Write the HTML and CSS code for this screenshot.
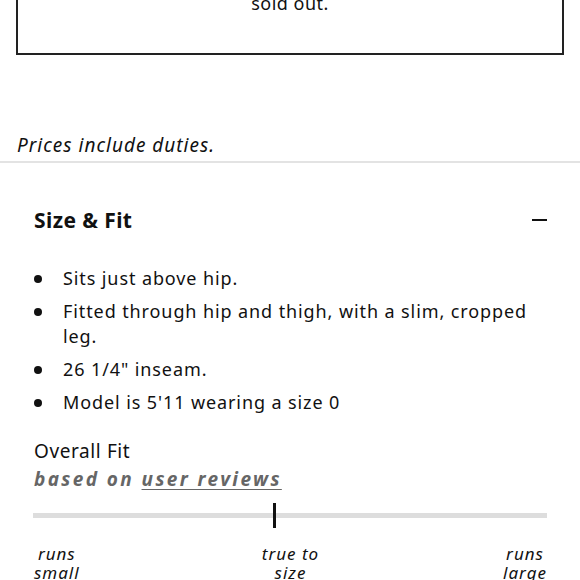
FILE: index.html
```html
<!DOCTYPE html>
<html lang="en">

<head>
	<meta charset="UTF-8">
	<meta name="viewport" content="width=device-width, initial-scale=1.0">
	<title>Size &amp; Fit</title>
	<link rel="stylesheet" href="styles.css">
</head>

<body>

	<div class="notice">sold out.</div>

	<p class="duties">Prices include duties.</p>

	<section class="panel">
		<div class="panel-head">
			<h2>Size &amp; Fit</h2>
			<span class="toggle"></span>
		</div>

		<ul class="details">
			<li>Sits just above hip.</li>
			<li>Fitted through hip and thigh, with a slim, cropped leg.</li>
			<li>26 1/4" inseam.</li>
			<li>Model is 5'11 wearing a size 0</li>
		</ul>

		<div class="fit">
			<div class="fit-title">Overall Fit</div>
			<div class="fit-source">based on <a href="#">user reviews</a></div>

			<div class="meter">
				<div class="track"></div>
				<div class="marker" style="left: 46.6%"></div>
			</div>

			<div class="scale">
				<span class="scale-low">runs<br>small</span>
				<span class="scale-mid">true to<br>size</span>
				<span class="scale-high">runs<br>large</span>
			</div>
		</div>
	</section>

</body>

</html>
```

FILE: styles.css
```css
body {
	font-family: 'Noto Sans', 'Lato', sans-serif;
	color: #111;
	background-color: #fff;
	margin: 0;
}

.notice {
	margin: -32px 16px 0 16px;
	padding: 20px 20px 37px;
	border: 2px solid #222;
	text-align: center;
	font-size: 18px;
	line-height: 26px;
	letter-spacing: 0.5px;
}

.duties {
	margin: 77px 0 0;
	padding: 0 17px 3px;
	border-bottom: 2px solid #e3e3e3;
	font-style: italic;
	font-size: 19px;
	line-height: 26px;
	letter-spacing: 1px;
}

.panel {
	padding: 0 33px 0 34px;
}

.panel-head {
	display: flex;
	justify-content: space-between;
	align-items: center;
	margin-top: 43px;
}

.panel-head h2 {
	margin: 0;
	font-size: 21px;
	line-height: 28px;
	font-weight: bold;
	letter-spacing: 0.4px;
}

.toggle {
	width: 15px;
	height: 2px;
	background-color: #111;
}

.details {
	list-style: none;
	margin: 32px 0 0;
	padding: 0;
	display: flex;
	flex-direction: column;
	gap: 8px;
	font-size: 18px;
	line-height: 25px;
	letter-spacing: 0.9px;
}

.details li {
	display: flex;
	align-items: flex-start;
}

.details li::before {
	content: "";
	flex: none;
	width: 8px;
	height: 8px;
	border-radius: 50%;
	background-color: #111;
	margin: 9px 21px 0 0;
}

.fit {
	margin-top: 22px;
}

.fit-title {
	font-size: 19px;
	line-height: 28px;
	letter-spacing: 0.6px;
}

.fit-source {
	font-size: 19px;
	line-height: 28px;
	font-weight: bold;
	font-style: italic;
	color: #666;
	letter-spacing: 2.4px;
}

.fit-source a {
	color: #666;
	text-decoration: underline;
	text-underline-offset: 3px;
}

.meter {
	position: relative;
	display: flex;
	align-items: center;
	height: 25px;
	margin: 10px 0 0 -1px;
}

.track {
	flex: 1;
	height: 5px;
	background-color: #ddd;
}

.marker {
	position: absolute;
	top: 0;
	width: 3px;
	height: 25px;
	background-color: #111;
}

.scale {
	display: grid;
	grid-template-columns: 1fr auto 1fr;
	margin-top: 16px;
	font-size: 17px;
	line-height: 19px;
	font-style: italic;
	text-align: center;
	letter-spacing: 1px;
}

.scale-low {
	justify-self: start;
}

.scale-high {
	justify-self: end;
}
```
